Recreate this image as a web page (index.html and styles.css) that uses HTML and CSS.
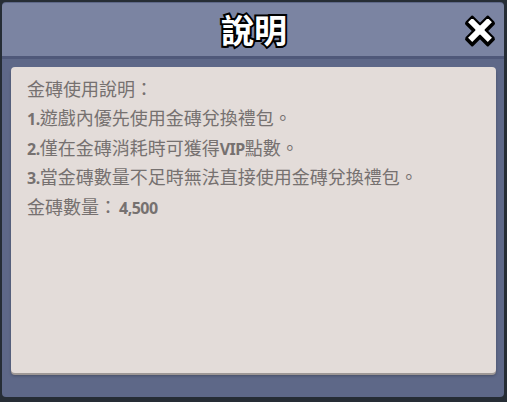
FILE: index.html
```html
<!DOCTYPE html>
<html lang="zh-Hant">

<head>
    <meta charset="UTF-8">
    <meta name="viewport" content="width=device-width, initial-scale=1.0">
    <title>說明</title>
    <link rel="stylesheet" href="styles.css">
</head>

<body>
    <div class="panel">
        <div class="header">
            <h1 class="title">說明</h1>
            <button class="close" aria-label="關閉">
                <svg width="34" height="34" viewBox="0 0 34 34">
                    <g transform="rotate(45 17 17)">
                        <path d="M13 2h8v11h11v8H21v11h-8V21H2v-8h11z" fill="#000" transform="translate(1 1)"
                            stroke="#000" stroke-width="3" stroke-linejoin="round" />
                        <path d="M13 2h8v11h11v8H21v11h-8V21H2v-8h11z" fill="#fff" stroke="#000" stroke-width="2.2"
                            stroke-linejoin="round" />
                    </g>
                </svg>
            </button>
        </div>
        <div class="card">
            <p>金磚使用說明：</p>
            <p><b>1.</b>遊戲內優先使用金磚兌換禮包。</p>
            <p><b>2.</b>僅在金磚消耗時可獲得<b>VIP</b>點數。</p>
            <p><b>3.</b>當金磚數量不足時無法直接使用金磚兌換禮包。</p>
            <p>金磚數量：<b class="amount">4,500</b></p>
        </div>
    </div>
</body>

</html>
```

FILE: styles.css
```css
body {
    margin: 0;
    padding: 2px 0 0 2px;
    background: #262d35;
    font-family: 'Noto Sans CJK TC', 'Noto Sans', sans-serif;
}

.panel {
    width: 502px;
    height: 395px;
    background: #5e6888;
    border-radius: 4px;
    display: flex;
    flex-direction: column;
}

.header {
    position: relative;
    height: 53px;
    margin-top: 1px;
    background: #7b84a2;
    border-radius: 4px 4px 0 0;
    box-shadow: 0 3px 0 #4f5879;
    display: flex;
    align-items: center;
    justify-content: center;
}

.title {
    margin: 0;
    font-size: 33px;
    font-weight: bold;
    color: #fff;
    -webkit-text-stroke: 4px #000;
    paint-order: stroke fill;
    text-shadow: 0 2px 0 #000;
    line-height: 1;
    padding-left: 2px;
}

.close {
    position: absolute;
    right: 7px;
    top: 10px;
    width: 34px;
    height: 34px;
    padding: 0;
    border: none;
    background: none;
    cursor: pointer;
}

.card {
    margin: 11px 8px 0 9px;
    height: 306px;
    box-sizing: border-box;
    padding: 7px 16px;
    background: #e3dcd9;
    border-radius: 4px;
    box-shadow: 0 2px 0 #9e9896, 0 3px 3px rgba(0, 0, 0, 0.25);
    color: #767170;
    font-size: 18px;
}

.card p {
    margin: 0;
    height: 29.4px;
    line-height: 29.4px;
}

.card b {
    font-family: 'Noto Sans', sans-serif;
    font-weight: bold;
    font-size: 16px;
    line-height: 1;
    letter-spacing: -0.5px;
}

.amount {
    margin-left: 2px;
    font-size: 17px;
    letter-spacing: 0;
}
```
